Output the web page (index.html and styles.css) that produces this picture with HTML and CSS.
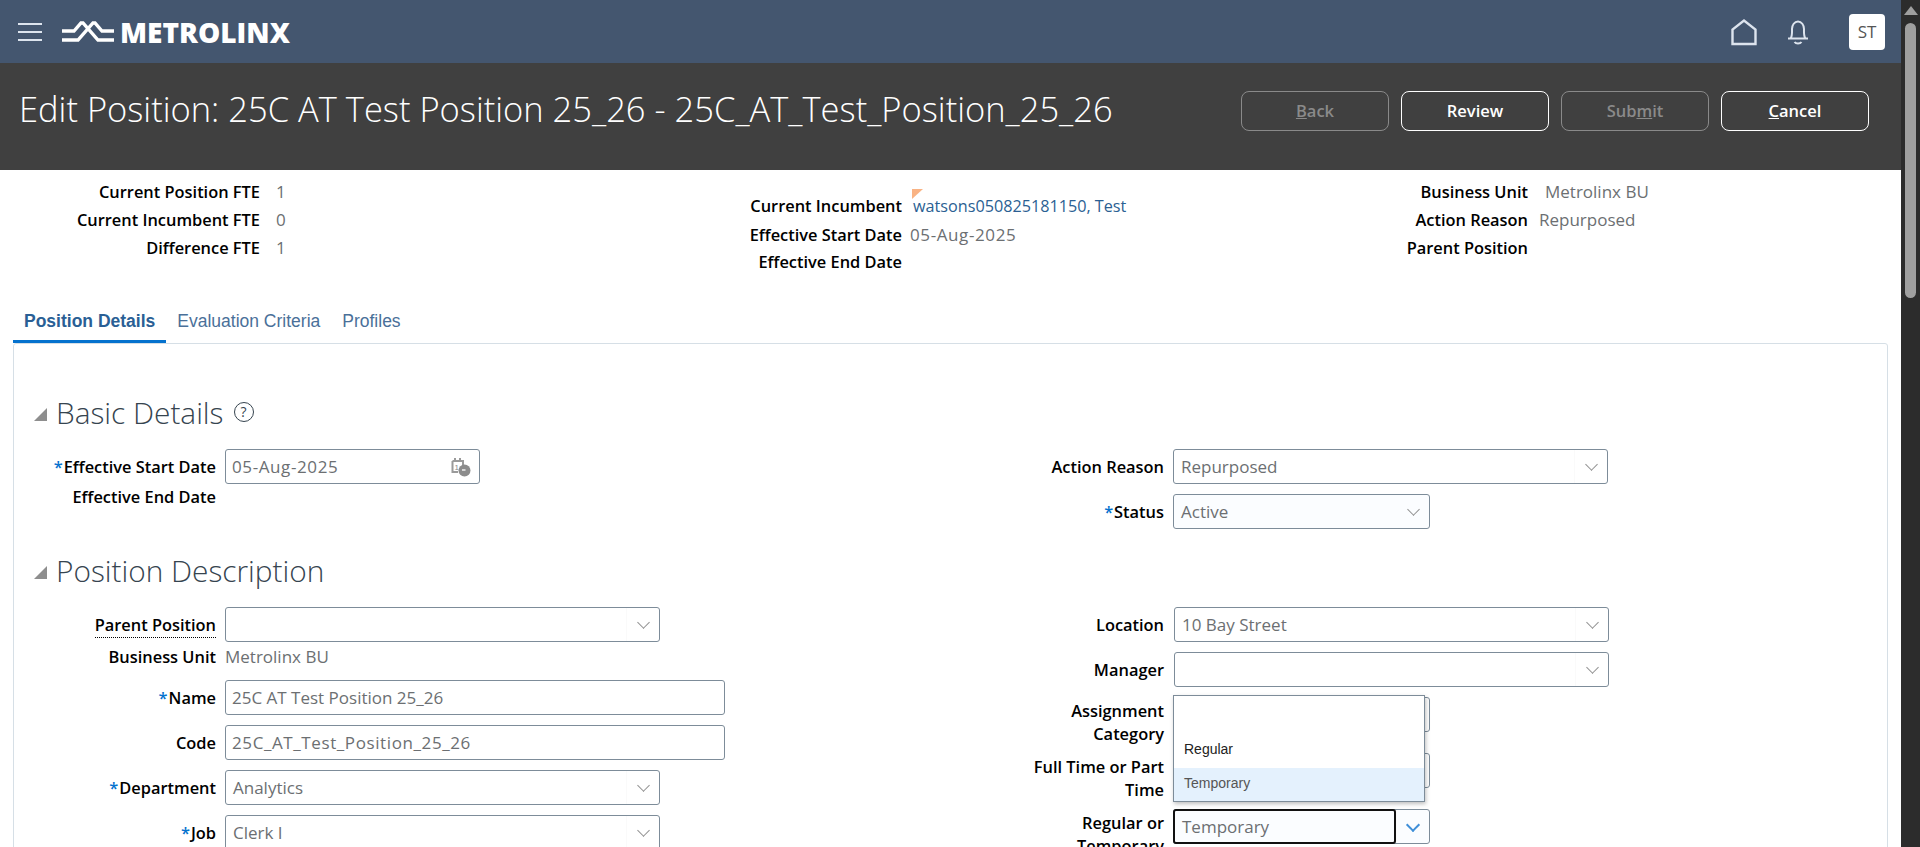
FILE: index.html
```html
<!DOCTYPE html>
<html>
  <head>
    <title>Edit Position</title>
    <meta charset="UTF-8">
    <link rel="stylesheet" href="styles.css">
  </head>
  <body>
    <div class="page">
      <div class="main">
        <div class="topbar">
          <div class="brand">
            <div class="burger"><span></span><span></span><span></span></div>
            <svg class="logo-mark" width="52" height="22" viewBox="0 0 52 22">
              <path d="M0 10H12L19 2H21L36 19H52M0 19H16L31 2H33L40 10H52" fill="none" stroke="#fff" stroke-width="3.400"/>
            </svg>
            <span class="logo-text">METROLINX</span>
          </div>
          <div class="topbar-right">
            <svg class="home-icon" width="28" height="28" viewBox="0 0 28 28">
              <path d="M2.500 26V11.500L14 2.500L25.500 11.500V26Z" fill="none" stroke="#dde4ee" stroke-width="2.400"/>
            </svg>
            <svg class="bell-icon" width="24" height="26" viewBox="0 0 24 26">
              <path d="M2 19.500H22M4.500 19.500C6.500 17 6 13 6 10C6 6 8.500 2.500 12 2.500C15.500 2.500 18 6 18 10C18 13 17.500 17 19.500 19.500M8.500 23C10 25 14 25 15.500 23" fill="none" stroke="#dde4ee" stroke-width="2"/>
            </svg>
            <div class="avatar">ST</div>
          </div>
        </div>

        <div class="titlebar">
          <h1>Edit Position: 25C AT Test Position 25_26 - 25C_AT_Test_Position_25_26</h1>
          <div class="actions">
            <button class="btn btn-off"><u>B</u>ack</button>
            <button class="btn">Review</button>
            <button class="btn btn-off">Sub<u>m</u>it</button>
            <button class="btn"><u>C</u>ancel</button>
          </div>
        </div>

        <div class="summary">
          <div class="sumcol sumcol-a">
            <span class="lbl">Current Position FTE</span><span class="val">1</span>
            <span class="lbl">Current Incumbent FTE</span><span class="val">0</span>
            <span class="lbl">Difference FTE</span><span class="val">1</span>
          </div>
          <div class="sumcol sumcol-b">
            <span class="lbl">Current Incumbent</span><span class="val flagged"><i class="flag"></i><a href="#">watsons050825181150, Test</a></span>
            <span class="lbl">Effective Start Date</span><span class="val spaced">05-Aug-2025</span>
            <span class="lbl">Effective End Date</span><span class="val"></span>
          </div>
          <div class="sumcol sumcol-c">
            <span class="lbl">Business Unit</span><span class="val val-in">Metrolinx BU</span>
            <span class="lbl">Action Reason</span><span class="val">Repurposed</span>
            <span class="lbl">Parent Position</span><span class="val"></span>
          </div>
        </div>

        <div class="tabs">
          <a class="tab tab-on" href="#">Position Details</a>
          <a class="tab" href="#">Evaluation Criteria</a>
          <a class="tab" href="#">Profiles</a>
        </div>

        <div class="panel">
          <div class="sec-head sec-first">
            <i class="twisty"></i>
            <h2>Basic Details</h2>
            <span class="help">?</span>
          </div>
          <div class="form">
            <div class="col">
              <div class="row">
                <label class="lbl"><em>*</em>Effective Start Date</label>
                <div class="box box-date">
                  <span class="spaced">05-Aug-2025</span>
                  <svg width="20" height="21" viewBox="0 0 20 21">
                    <path d="M1.500 5H12V9M1.500 5V16H7M4 2V5M9 2V5" fill="none" stroke="#9a9a9a" stroke-width="2"/>
                    <text x="3.500" y="14" font-size="8" fill="#8a8a8a" font-family="Liberation Sans">1</text>
                    <circle cx="13.500" cy="14.500" r="6" fill="#8c8c8c"/>
                    <path d="M11 14H14.500" stroke="#fff" stroke-width="1.300"/>
                  </svg>
                </div>
              </div>
              <div class="row row-text row-tight">
                <label class="lbl">Effective End Date</label>
              </div>
            </div>
            <div class="col col-right">
              <div class="row">
                <label class="lbl">Action Reason</label>
                <div class="box box-select box-wide"><span>Repurposed</span><i class="trigger"><b class="chev"></b></i></div>
              </div>
              <div class="row">
                <label class="lbl"><em>*</em>Status</label>
                <div class="box box-select box-small box-tint"><span>Active</span><i class="trigger"><b class="chev"></b></i></div>
              </div>
            </div>
          </div>

          <div class="sec-head">
            <i class="twisty"></i>
            <h2>Position Description</h2>
          </div>
          <div class="form">
            <div class="col">
              <div class="row">
                <label class="lbl"><span class="dotted">Parent Position</span></label>
                <div class="box box-select box-wide"><span></span><i class="trigger"><b class="chev"></b></i></div>
              </div>
              <div class="row row-text">
                <label class="lbl">Business Unit</label>
                <span class="val">Metrolinx BU</span>
              </div>
              <div class="row">
                <label class="lbl"><em>*</em>Name</label>
                <div class="box box-text"><span>25C AT Test Position 25_26</span></div>
              </div>
              <div class="row">
                <label class="lbl">Code</label>
                <div class="box box-text"><span class="spaced">25C_AT_Test_Position_25_26</span></div>
              </div>
              <div class="row">
                <label class="lbl"><em>*</em>Department</label>
                <div class="box box-select box-wide"><span>Analytics</span><i class="trigger"><b class="chev"></b></i></div>
              </div>
              <div class="row">
                <label class="lbl"><em>*</em>Job</label>
                <div class="box box-select box-wide"><span>Clerk I</span><i class="trigger"><b class="chev"></b></i></div>
              </div>
            </div>
            <div class="col col-right col-desc">
              <div class="row">
                <label class="lbl">Location</label>
                <div class="box box-select box-wide"><span>10 Bay Street</span><i class="trigger"><b class="chev"></b></i></div>
              </div>
              <div class="row">
                <label class="lbl">Manager</label>
                <div class="box box-select box-wide"><span></span><i class="trigger"><b class="chev"></b></i></div>
              </div>
              <div class="row row-two">
                <label class="lbl">Assignment<br>Category</label>
                <div class="box box-small"></div>
                <ul class="dropdown">
                  <li></li>
                  <li>Regular</li>
                  <li class="picked">Temporary</li>
                </ul>
              </div>
              <div class="row row-two">
                <label class="lbl">Full Time or Part<br>Time</label>
                <div class="box box-small"></div>
              </div>
              <div class="row row-two">
                <label class="lbl">Regular or<br>Temporary</label>
                <div class="box box-small box-focus">
                  <span class="focus-input">Temporary</span>
                  <i class="trigger"><b class="chev chev-blue"></b></i>
                </div>
              </div>
            </div>
          </div>
        </div>
      </div>

      <div class="scrollbar">
        <i class="scroll-up"></i>
        <i class="scroll-thumb"></i>
      </div>
    </div>
  </body>
</html>
```

FILE: styles.css
```css
html, body { margin: 0; height: 100%; overflow: hidden; }
body { font-family: 'Open Sans', 'Liberation Sans', sans-serif; font-size: 17px; color: #000; background: #fff; }
.page { display: flex; height: 847px; }
.main { flex: 1; min-width: 0; height: 847px; overflow: hidden; }

/* scrollbar */
.scrollbar { width: 19px; background: #2c2c2c; display: flex; flex-direction: column; align-items: center; padding-top: 6px; box-sizing: border-box; }
.scroll-up { width: 0; height: 0; border-left: 7px solid transparent; border-right: 7px solid transparent; border-bottom: 9px solid #9f9f9f; }
.scroll-thumb { width: 11px; height: 275px; margin-top: 8px; border-radius: 6px; background: #9f9f9f; }

/* top bar */
.topbar { height: 63px; background: #44566f; display: flex; justify-content: space-between; align-items: center; }
.brand { display: flex; align-items: center; padding-left: 18px; }
.burger { width: 24px; display: flex; flex-direction: column; gap: 6px; margin-right: 20px; }
.burger span { height: 2px; background: #dde4ee; }
.logo-mark { margin-right: 6px; }
.logo-text { color: #fff; font-size: 28px; font-weight: 800; line-height: 30px; }
.topbar-right { display: flex; align-items: center; padding-right: 16px; }
.home-icon { margin-right: 28px; }
.bell-icon { margin-right: 39px; }
.avatar { width: 36px; height: 36px; background: #fff; border-radius: 4px; color: #555; font-size: 17px; text-align: center; line-height: 36px; }

/* title */
.titlebar { height: 107px; background: #404040; display: flex; justify-content: space-between; padding: 28px 32px 0 19px; box-sizing: border-box; }
h1 { margin: 0; color: #fff; font-size: 34.500px; font-weight: 300; line-height: 36px; white-space: nowrap; }
.actions { display: flex; gap: 12px; }
.btn { width: 148px; height: 40px; background: transparent; border: 1px solid #fff; border-radius: 8px; color: #fff; font-family: inherit; font-size: 16.500px; font-weight: 600; padding: 0 0 2px; }
.btn-off { border-color: #8a8a8a; color: #8a8a8a; }

/* summary */
.summary { display: flex; height: 134px; }
.lbl { font-size: 16.400px; font-weight: 600; text-align: right; white-space: nowrap; }
.val { font-weight: 500; color: #6c6f72; white-space: nowrap; }
.spaced { letter-spacing: 0.600px; }
.sumcol { display: grid; align-content: start; align-items: center; }
.sumcol-a { width: 640px; grid-template-columns: 260px 1fr; column-gap: 16px; grid-auto-rows: 28px; padding-top: 7px; box-sizing: border-box; }
.sumcol-b { width: 640px; grid-template-columns: 262px 1fr; column-gap: 8px; grid-template-rows: 30px 28px 26px; padding-top: 20px; box-sizing: border-box; }
.sumcol-c { flex: 1; grid-template-columns: 248px 1fr; column-gap: 11px; grid-auto-rows: 28px; padding-top: 7px; box-sizing: border-box; }
.val-in { padding-left: 6px; }
.flagged { position: relative; }
.flagged a { font-size: 16.200px; color: #2b5f93; text-decoration: none; padding-left: 3px; }
.flag { position: absolute; left: 2px; top: -5px; width: 0; height: 0; border-top: 10px solid #f9b384; border-right: 11px solid transparent; }

/* tabs */
.tabs { display: flex; padding-left: 13px; height: 39px; }
.tab { font-family: 'Liberation Sans', sans-serif; font-size: 17.500px; color: #4a7099; text-decoration: none; padding: 7px 11px 0; box-sizing: border-box; height: 39px; border-bottom: 3px solid transparent; }
.tab-on { color: #2a5f95; font-weight: 700; border-bottom-color: #0572ce; }

/* panel */
.panel { margin: 0 13px; height: 600px; border: 1px solid #d6dfe6; border-radius: 3px; box-sizing: border-box; }
.sec-head { display: flex; align-items: center; height: 46px; margin: 10px 0 12px; padding-left: 20px; }
.sec-first { margin-top: 47px; }
h2 { margin: 0; font-size: 29.800px; font-weight: 300; color: #36444f; line-height: 44px; height: 46px; }
.twisty { width: 0; height: 0; margin-right: 9px; border-left: 13px solid transparent; border-bottom: 13px solid #8e8e8e; }
.help { width: 18px; height: 18px; margin: -4px 0 0 10px; border: 1.500px solid #36444f; border-radius: 50%; font-size: 14px; line-height: 18px; text-align: center; color: #36444f; }

.form { display: grid; grid-template-columns: 936px 1fr; }
.col-right .row { grid-template-columns: 214px auto; }
.row { display: grid; grid-template-columns: 202px auto; column-gap: 9px; margin-bottom: 10px; justify-content: start; position: relative; }
.row > .lbl { line-height: 35px; }
.row em { font-style: normal; color: #0572ce; margin-right: 1px; }
.row-text { height: 28px; margin-top: -10px; padding-top: 1px; box-sizing: border-box; }
.row-text > .lbl, .row-text > .val { line-height: 28px; }
.row-tight { height: 26px; margin-bottom: 0; padding-top: 0; }
.row-tight > .lbl { line-height: 26px; }
.row-two { height: 46px; }
.row-two > .lbl { line-height: 23px; padding-top: 2px; }
.dotted { border-bottom: 1px dotted #000; padding-bottom: 1px; }

.box { height: 35px; box-sizing: border-box; border: 1px solid #7d8c99; border-radius: 3px; background: #fff; color: #6c6f72; font-weight: 500; display: flex; align-items: center; justify-content: space-between; padding-left: 6px; }
.box-select { padding-left: 7px; }
.box-date { width: 255px; padding-right: 8px; }
.box-wide { width: 435px; }
.box-text { width: 500px; }
.box-small { width: 257px; }
.box-tint { background: #fbfdff; }
.col-desc .box { margin-left: 1px; }
.col-desc .box-small { margin-left: 0; }
.trigger { width: 32px; height: 33px; border-left: 1px solid #fafafa; display: flex; align-items: center; justify-content: center; }
.box-tint .trigger { border-left: none; }
.chev { width: 8px; height: 8px; border-right: 1px solid #909090; border-bottom: 1px solid #909090; transform: translateY(-2px) rotate(45deg); }
.chev-blue { border-color: #3f8fd8; border-width: 2px; }

.box-focus { padding-left: 0; background: #fbfdff; }
.focus-input { width: 223px; height: 35px; box-sizing: border-box; margin: -1px 0 -1px -1px; border: 2px solid #111; border-radius: 3px; padding-left: 7px; line-height: 31px; }

/* open list over the fields */
.dropdown { position: absolute; left: 223px; top: -2px; width: 252px; height: 107px; margin: 0; padding: 0; list-style: none; box-sizing: border-box; background: #fff; border: 1px solid #7d8c99; box-shadow: 1px 2px 4px rgba(0,0,0,0.25); font-family: 'Liberation Sans', sans-serif; font-size: 14px; font-weight: 400; z-index: 2; }
.dropdown li { height: 36px; line-height: 34px; padding-left: 10px; color: #222; }
.dropdown .picked { height: 33px; line-height: 30px; background: #e4f1fd; color: #555; }
```
